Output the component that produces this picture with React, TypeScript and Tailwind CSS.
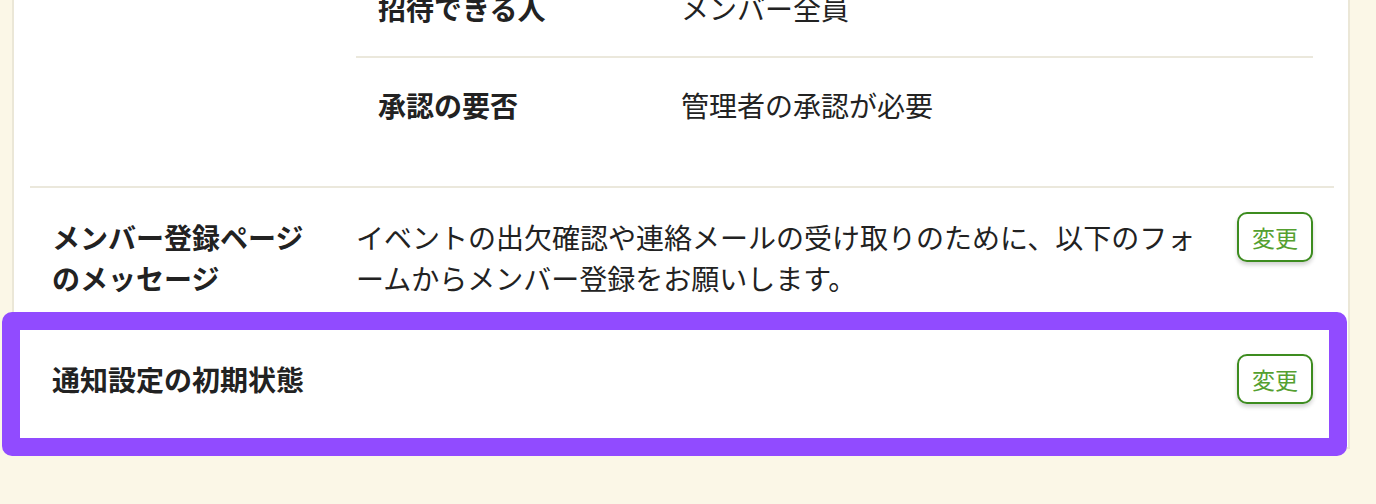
import React from 'react';

const FONT = '"Noto Sans CJK JP", "Noto Sans", sans-serif';

function ChangeButton() {
  return (
    <button
      type="button"
      className="-mt-[5px] -mb-[5px] flex h-[50px] w-[76px] shrink-0 items-center justify-center rounded-[10px] border-2 border-[#3d8c1f] bg-white text-[23px] leading-none text-[#55a030] shadow-[0_3px_4px_rgba(0,0,0,0.18)]"
    >
      変更
    </button>
  );
}

function SubRow({ label, value, last }: { label: string; value: string; last?: boolean }) {
  return (
    <div className={last ? 'flex py-[27px]' : 'flex border-b-2 border-[#ebe8dc] py-[27px]'}>
      <div className="w-[325px] shrink-0 pl-[22px] font-bold">{label}</div>
      <div>{value}</div>
    </div>
  );
}

export default function App() {
  return (
    <div
      className="relative h-[504px] w-[1376px] overflow-hidden bg-[#fbf7e7] text-[28px] leading-[41px] text-[#222]"
      style={{ fontFamily: FONT }}
    >
      <div className="-mt-[41px] ml-[12px] w-[1338px] border-2 border-[#ebe7d7] bg-white pl-[16px] pr-[14px] pb-[18px]">
        {/* 招待の設定（ラベルは画面外） */}
        <div className="flex border-b-2 border-[#ebe8dc] pl-[22px] pr-[21px] pb-[33px]">
          <div className="mr-[34px] w-[270px] shrink-0" />
          <div className="flex-1">
            <SubRow label="招待できる人" value="メンバー全員" />
            <SubRow label="承認の要否" value="管理者の承認が必要" last />
          </div>
        </div>

        {/* 登録ページのメッセージ */}
        <div className="flex items-start border-b-2 border-[#ebe8dc] py-[29px] pl-[22px] pr-[21px]">
          <div className="mr-[34px] w-[270px] shrink-0 font-bold">メンバー登録ページのメッセージ</div>
          <div className="mr-[22px] flex-1">
            イベントの出欠確認や連絡メールの受け取りのために、以下のフォームからメンバー登録をお願いします。
          </div>
          <ChangeButton />
        </div>

        {/* 通知設定 */}
        <div className="flex items-start py-[29px] pl-[22px] pr-[21px]">
          <div className="mr-[34px] w-[270px] shrink-0 font-bold">通知設定の初期状態</div>
          <div className="mr-[22px] flex-1" />
          <ChangeButton />
        </div>
      </div>

      {/* highlight */}
      <div className="pointer-events-none absolute left-[2px] top-[312px] h-[144px] w-[1345px] rounded-[10px] border-[18px] border-[#914bff]" />
    </div>
  );
}
